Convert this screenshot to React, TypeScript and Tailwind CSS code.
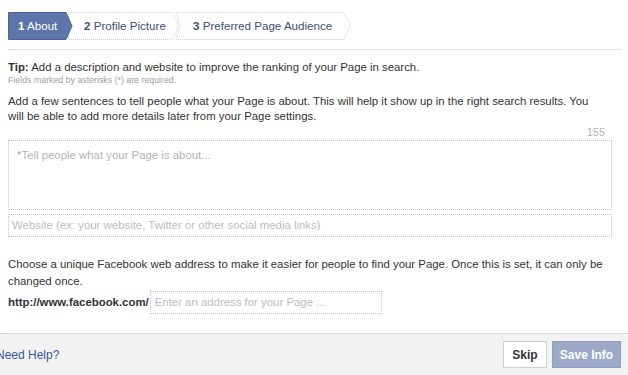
import React from "react";

export default function App() {
  return (
    <div className="w-[628px] h-[375px] bg-white overflow-hidden flex flex-col font-['Liberation_Sans',Arial,sans-serif] text-[11.4px] text-[#333]">
      {/* Steps */}
      <div className="pl-2 pt-3">
        <div className="relative h-[28px] w-[344px]">
          <svg className="absolute inset-0" width="344" height="28" viewBox="0 0 344 28">
            <polygon points="168.5,0.5 335.5,0.5 342.5,14 335.5,27.5 168.5,27.5 171.5,14" fill="#fff" stroke="#c4cde2" strokeDasharray="1 1" />
            <polygon points="60.5,0.5 164.5,0.5 170.5,14 164.5,27.5 60.5,27.5" fill="#fff" stroke="#c4cde2" strokeDasharray="1 1" />
            <polygon points="0.5,0.5 58,0.5 64,14 58,27.5 0.5,27.5" fill="#5d75a9" stroke="#4c639a" />
          </svg>
          <div className="relative flex h-full items-center text-[11.6px]">
            <span className="w-[66px] pl-[10px] text-white">
              <b>1</b> About
            </span>
            <span className="w-[109px] pl-[10px] text-[#3b4f80]">
              <b>2</b> Profile Picture
            </span>
            <span className="pl-[10px] text-[#3b4f80]">
              <b>3</b> Preferred Page Audience
            </span>
          </div>
        </div>
      </div>

      <div className="mx-2 mt-[9px] border-t border-dotted border-[#c8c8c8]" />

      {/* Content */}
      <div className="px-2 pt-[10px]">
        <p className="leading-[15px]">
          <b>Tip:</b> Add a description and website to improve the ranking of your Page in search.
        </p>
        <p className="text-[8.8px] leading-[11px] text-[#a0a0a0]">Fields marked by asterisks (*) are required.</p>
        <p className="mt-[8px] leading-[15px]">
          Add a few sentences to tell people what your Page is about. This will help it show up in the right search results. You
          <br />
          will be able to add more details later from your Page settings.
        </p>
        <div className="w-[603px] flex justify-end pr-[6px] text-[11px] leading-[13px] text-[#b5b5b5] mt-[2px]">155</div>
        <div className="mt-[1px] w-[604px] h-[70px] border border-dotted border-[#bcc5dc] px-[8px] pt-[6px] text-[#b3b3b3]">
          *Tell people what your Page is about...
        </div>
        <div className="mt-[4px] w-[604px] h-[23px] border border-dotted border-[#bcc5dc] px-[3px] flex items-center text-[#bdbdbd]">
          Website (ex: your website, Twitter or other social media links)
        </div>
        <p className="mt-[19px] leading-[17px] whitespace-nowrap">
          Choose a unique Facebook web address to make it easier for people to find your Page. Once this is set, it can only be
          <br />
          changed once.
        </p>
        <div className="flex items-center mt-[1px]">
          <b className="text-[#333]">http://www.facebook.com/</b>
          <div className="ml-[1px] w-[232px] h-[23px] border border-dotted border-[#bcc5dc] px-[4px] flex items-center text-[#bdbdbd]">
            Enter an address for your Page ...
          </div>
        </div>
      </div>

      {/* Footer */}
      <div className="mt-auto h-[42px] bg-[#f2f2f2] border-t border-dotted border-[#c8c8c8] flex items-center justify-between pr-[7px]">
        <span className="ml-[-4px] text-[#3b5998] font-medium text-[12px]">Need Help?</span>
        <div className="flex gap-[5px]">
          <button className="w-[44px] h-[27px] bg-white border border-[#cfcfcf] font-bold text-[#333] text-[12px]">Skip</button>
          <button className="w-[69px] h-[27px] bg-[#9caac8] border border-[#8d9cbf] font-bold text-white text-[12px]">Save Info</button>
        </div>
      </div>
    </div>
  );
}
